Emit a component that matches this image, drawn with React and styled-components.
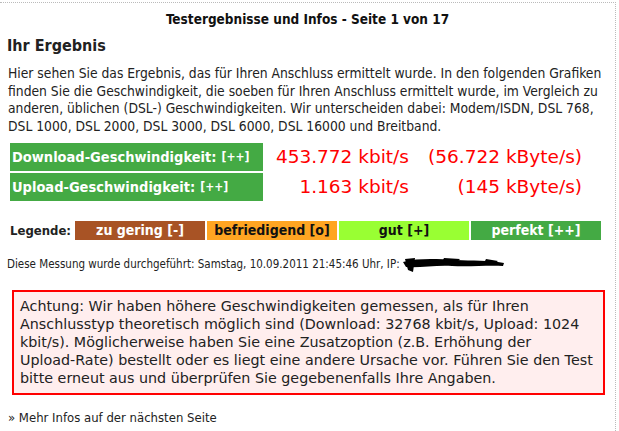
import React from 'react'
import styled, { createGlobalStyle } from "styled-components";

const Global = createGlobalStyle`
    body{
        margin:0;
        background:white;
        font-family: "DejaVu Sans Condensed", "DejaVu Sans", sans-serif;
        color:#222;
    }
`;

const Page = styled.div`
    width: 616px;
    margin-top: 2px;
    min-height: 429px;
    border-top: 1px dotted #bbb;
    border-right: 1px dotted #bbb;
    box-sizing: border-box;
    padding: 8px 8px 0 8px;
`;

const Title = styled.div`
    text-align: center;
    font-weight: bold;
    font-size: 13.5px;
    color: #111;
`;

const Heading = styled.h2`
    font-size: 16px;
    font-weight: bold;
    margin: 9px 0 0 -1px;
    color: #222;
`;

const Text = styled.p`
    font-size: 13.75px;
    line-height: 17.7px;
    white-space: nowrap;
    margin: 10px 0 0 0;
    color: #222;
`;

const Rows = styled.div`
    margin-top: 7px;
    margin-left: 2px;
    display: flex;
    flex-direction: column;
    gap: 2px;
`;

const Row = styled.div`
    display: flex;
    align-items: center;
`;

const Label = styled.div`
    width: 253px;
    height: 28px;
    background: #44aa44;
    color: white;
    font-weight: bold;
    font-size: 14.5px;
    display: flex;
    align-items: center;
    padding-left: 2px;
    box-sizing: border-box;
    small{
        font-size: 12px;
        margin-left: 5px;
    }
`;

const Value = styled.div`
    width: ${p => p.$w}px;
    text-align: right;
    color: #ff0000;
    font-family: "DejaVu Sans", sans-serif;
    font-size: 18.5px;
`;

const Legend = styled.div`
    display: flex;
    align-items: center;
    gap: 2px;
    margin: 20px 0 0 2px;
    font-size: 14px;
    font-weight: bold;
    span{
        width: 63px;
        font-size: 13px;
        color:#222;
    }
`;

const Chip = styled.div`
    width: 130px;
    height: 19px;
    line-height: 19px;
    text-align: center;
    background: ${p => p.$bg};
    color: ${p => p.$fg};
`;

const Meta = styled.div`
    font-size: 11.5px;
    margin-top: 15px;
    margin-left: -1px;
    display: flex;
    align-items: center;
    white-space: nowrap;
    color: #222;
`;

const Alert = styled.div`
    margin: 17px 0 0 4px;
    width: 593px;
    box-sizing: border-box;
    border: 2px solid #ff0000;
    background: #ffeeee;
    padding: 5px 6px 6px 6px;
    font-family: "DejaVu Sans", sans-serif;
    font-size: 14.3px;
    line-height: 18px;
    white-space: nowrap;
    color: #222;
`;

const More = styled.div`
    margin-top: 15px;
    font-size: 13px;
    color: #222;
`;

const Scribble = () => (
    <svg width="108" height="18" viewBox="0 0 108 18">
        <path d="M3 7 C18 3 36 4 56 5 C72 6 88 5 104 8 L103 11 C88 10 70 12 52 11 C36 10 20 13 6 12 Z"
            fill="#000" />
        <path d="M5 4 L15 3 L13 17 L8 15 Z" fill="#000" />
        <path d="M44 3 L60 4 L56 8 L42 7 Z" fill="#000" />
        <path d="M86 4 L98 6 L94 9 L84 8 Z" fill="#000" />
    </svg>
);

const App = () => {
  return (
    <>
      <Global />
      <Page>
        <Title>Testergebnisse und Infos - Seite 1 von 17</Title>
        <Heading>Ihr Ergebnis</Heading>
        <Text>
          Hier sehen Sie das Ergebnis, das für Ihren Anschluss ermittelt wurde. In den folgenden Grafiken<br />
          finden Sie die Geschwindigkeit, die soeben für Ihren Anschluss ermittelt wurde, im Vergleich zu<br />
          anderen, üblichen (DSL-) Geschwindigkeiten. Wir unterscheiden dabei: Modem/ISDN, DSL 768,<br />
          DSL 1000, DSL 2000, DSL 3000, DSL 6000, DSL 16000 und Breitband.
        </Text>
        <Rows>
          <Row>
            <Label>Download-Geschwindigkeit:<small>[++]</small></Label>
            <Value $w={146}>453.772 kbit/s</Value>
            <Value $w={173}>(56.722 kByte/s)</Value>
          </Row>
          <Row>
            <Label>Upload-Geschwindigkeit:<small>[++]</small></Label>
            <Value $w={146}>1.163 kbit/s</Value>
            <Value $w={173}>(145 kByte/s)</Value>
          </Row>
        </Rows>
        <Legend>
          <span>Legende:</span>
          <Chip $bg="#a85325" $fg="white">zu gering [-]</Chip>
          <Chip $bg="#ffa522" $fg="#111">befriedigend [o]</Chip>
          <Chip $bg="#99ff33" $fg="#111">gut [+]</Chip>
          <Chip $bg="#44aa44" $fg="white">perfekt [++]</Chip>
        </Legend>
        <Meta>
          Diese Messung wurde durchgeführt: Samstag, 10.09.2011 21:45:46 Uhr, IP:
          <Scribble />
        </Meta>
        <Alert>
          Achtung: Wir haben höhere Geschwindigkeiten gemessen, als für Ihren<br />
          Anschlusstyp theoretisch möglich sind (Download: 32768 kbit/s, Upload: 1024<br />
          kbit/s). Möglicherweise haben Sie eine Zusatzoption (z.B. Erhöhung der<br />
          Upload-Rate) bestellt oder es liegt eine andere Ursache vor. Führen Sie den Test<br />
          bitte erneut aus und überprüfen Sie gegebenenfalls Ihre Angaben.
        </Alert>
        <More>» Mehr Infos auf der nächsten Seite</More>
      </Page>
    </>
  )
}

export default App;
